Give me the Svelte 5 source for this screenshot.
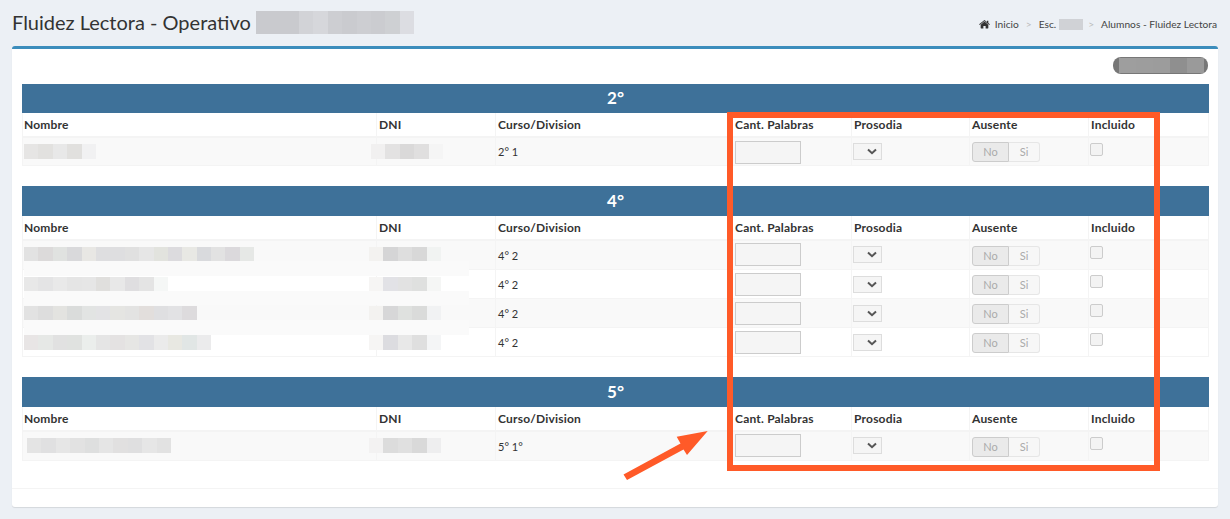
<script>
  const cols = ['Nombre', 'DNI', 'Curso/Division', 'Cant. Palabras', 'Prosodia', 'Ausente', 'Incluido'];
  const widths = [354, 119, 237, 119, 118, 119, 120];

  const groups = [
    {
      title: '2°',
      first: true,
      rows: [
        { curso: '2° 1', name: ['#e6e5e4', '#e2e1df', '#e8e8e8', '#e1e0de', '#f1f1f2'], dni: ['#f1f0f0', '#e3e2e2', '#dad9d9', '#e0dfdf', '#f5f5f5'], off: 0, dniOff: -8 }
      ]
    },
    {
      title: '4°',
      rows: [
        { curso: '4° 2', name: ['#e2e2e2', '#dcdada', '#e0e2e0', '#d9d9db', '#e8e7e4', '#dedee0', '#dedee0', '#e0e0e0', '#e6e6e6', '#e2e3de', '#dcdbde', '#e8e8e4', '#d9dadd', '#e2e2e2', '#dbd9dc', '#e6e8e6'], dni: ['#f3f2f0', '#d5d5d6', '#dedede', '#d8d8d8', '#f1f3f2'], off: 0, dniOff: -10 },
        { curso: '4° 2', name: ['#e8e8e8', '#e4e4e5', '#e9e9e9', '#e5e5e5', '#e6e6e6', '#e0dfdd', '#e8e8e8', '#dfdee0', '#e4e4e4', '#f5f7f6'], dni: ['#f6f5f4', '#e2e2e6', '#e2e2e2', '#dfe0df', '#f5f6f5'], off: 0, dniOff: -10 },
        { curso: '4° 2', name: ['#e2e2e2', '#dddddd', '#e3e3e0', '#dadcdb', '#e2e4e3', '#e3e3e5', '#e5e5e2', '#e3e3e2', '#e2dedc', '#dfdfe1', '#e2e2e4', '#dddbdd'], dni: ['#f3f2f0', '#d7d7d8', '#dfe1df', '#dadbda', '#f1f2f3'], off: 0, dniOff: -10 },
        { curso: '4° 2', name: ['#e8e5e5', '#e6e8e6', '#e1e1e1', '#e0e2e0', '#ebeeec', '#e5e5e5', '#e4e2e2', '#e6e6e4', '#e2e2e5', '#ebebeb', '#e8e8e2', '#e1e6e5', '#ebebec'], dni: ['#f6f5f4', '#dcdce0', '#e8e8e8', '#dfdfdf', '#f4f5f6'], off: 0, dniOff: -10 }
      ]
    },
    {
      title: '5°',
      rows: [
        { curso: '5° 1°', name: ['#e4e4e4', '#e0e0e1', '#e6e6e6', '#e2e2e2', '#dedfdf', '#e5e5e5', '#e1e0e0', '#dfdfe0', '#e6e6e6', '#e2e2e2'], dni: ['#f3f2f2', '#dcdcdc', '#e0e0e0', '#d9d9d9', '#eeeeef'], off: 3, dniOff: -10 }
      ]
    }
  ];

  const titleBlur = ['#c9cace', '#c9cace', '#c9cace', '#d2d3d7', '#d6d7db', '#cdced2', '#cacbcf', '#cdced2', '#cbccd0', '#ced0d3', '#dcdde2'];
  const pillBlur = ['#9e9e9e', '#9d9d9d', '#9c9c9c', '#8f8f8f', '#9a9a9a'];
</script>

<div class="page">
  <header class="top">
    <h1>Fluidez Lectora - Operativo
      <span class="mosaic title-blur">
        {#each titleBlur as c}<i style="background:{c}"></i>{/each}
      </span>
    </h1>
    <nav class="crumbs">
      <svg class="home" width="11" height="9" viewBox="0 0 24 20" aria-hidden="true">
        <path fill="#333" d="M12 3.2 3.5 10.300V18a1 1 0 0 0 1 1H9.500v-5.500h5V19h5a1 1 0 0 0 1-1v-7.700zM24 9.600 20.500 6.700V1.500H17.500v2.700L12 0 0 9.600l1.300 1.500L12 2.300l10.700 8.800z"/>
      </svg>
      <span>Inicio</span>
      <b>&gt;</b>
      <span>Esc.</span>
      <span class="crumb-blur"></span>
      <b>&gt;</b>
      <span>Alumnos - Fluidez Lectora</span>
    </nav>
  </header>

  <section class="box">
    <div class="toolbar">
      <div class="pill">
        {#each pillBlur as c}<i style="background:{c}"></i>{/each}
      </div>
    </div>

    {#each groups as g}
      <table class:first={g.first}>
        <colgroup>
          {#each widths as w}<col style="width:{w}px" />{/each}
        </colgroup>
        <thead>
          <tr class="band"><th colspan="7">{g.title}</th></tr>
          <tr class="heads">
            {#each cols as c}<th>{c}</th>{/each}
          </tr>
        </thead>
        <tbody>
          {#each g.rows as r}
            <tr>
              <td>
                <span class="mosaic" style="margin-left:{r.off}px">
                  {#each r.name as c}<i style="background:{c}"></i>{/each}
                </span>
              </td>
              <td>
                <span class="mosaic dni" style="margin-left:{r.dniOff}px">
                  {#each r.dni as c}<i style="background:{c}"></i>{/each}
                </span>
              </td>
              <td class="curso">{r.curso}</td>
              <td><input class="qty" type="text" disabled /></td>
              <td>
                <span class="sel">
                  <svg width="10" height="7" viewBox="0 0 10 7" aria-hidden="true">
                    <path d="M1 1.500 5 5.200 9 1.500" fill="none" stroke="#555" stroke-width="2"/>
                  </svg>
                </span>
              </td>
              <td>
                <span class="toggle"><span class="on">No</span><span class="off">Si</span></span>
              </td>
              <td class="inc"><span class="check"></span></td>
            </tr>
          {/each}
        </tbody>
      </table>
    {/each}

    <div class="foot"></div>

    <div class="strip s1"></div>
    <div class="strip s2"></div>
    <div class="strip s3"></div>
  </section>

  <div class="mark"></div>
  <svg class="arrow" width="92" height="56" viewBox="0 0 92 56" aria-hidden="true">
    <path d="M87.700 3 56.700 8.700 60.500 15.500 3.500 46.500 7 52 63.500 21.500 67 27z" fill="#ff5a28"/>
  </svg>
</div>

<style>
  :global(body) {
    margin: 0;
    background: #ecf0f5;
  }

  .page {
    position: relative;
    width: 1230px;
    height: 519px;
    overflow: hidden;
    background: #ecf0f5;
    font-family: Lato, "Open Sans", sans-serif;
    color: #333;
  }

  /* ── Header ── */
  .top {
    height: 46px;
    box-sizing: border-box;
    padding: 9px 13px 0 12px;
    display: flex;
    justify-content: space-between;
    align-items: flex-start;
  }

  h1 {
    margin: 0;
    font-size: 20px;
    font-weight: 400;
    line-height: 26px;
    color: #333;
    display: flex;
    align-items: center;
    gap: 5px;
  }

  .mosaic {
    display: inline-flex;
    vertical-align: top;
    height: 15px;
  }

  .mosaic i {
    display: block;
    width: 14.400px;
    height: 100%;
  }

  .title-blur {
    height: 23px;
  }

  .crumbs {
    display: flex;
    align-items: center;
    gap: 5px;
    margin-top: 8px;
    font-size: 10.200px;
    line-height: 14px;
    color: #444;
  }

  .crumbs b {
    font-weight: 400;
    color: #bbb;
    margin: 0 2px;
  }

  .home {
    margin-right: 0;
  }

  .crumb-blur {
    width: 24px;
    height: 11px;
    margin-left: -2px;
    margin-right: -2px;
    background: #d0d2d6;
  }

  /* ── Box ── */
  .box {
    position: relative;
    margin: 0 12px;
    height: 461px;
    box-sizing: border-box;
    padding: 8px 10px 0;
    background: #fff;
    border-top: 3px solid #3c8dbc;
    border-radius: 3px;
    box-shadow: 0 1px 1px rgba(0, 0, 0, 0.1);
  }

  .toolbar {
    display: flex;
    justify-content: flex-end;
    height: 27px;
  }

  .pill {
    display: flex;
    width: 95px;
    height: 17px;
    box-sizing: border-box;
    padding: 1px 4px 1px 6px;
    background: #777;
    border-radius: 8px;
  }

  .pill i {
    flex: 1;
  }

  /* ── Tables ── */
  table {
    width: 1186px;
    border-collapse: collapse;
    table-layout: fixed;
    margin-bottom: 20px;
  }

  th, td {
    box-sizing: border-box;
    padding: 0 2px;
    text-align: left;
    border: 1px solid #f4f4f4;
  }

  th:first-child, td:first-child {
    padding-left: 1px;
  }

  .band th {
    height: 29px;
    padding: 0 0 2px;
    background: #3e7199;
    border-color: #3e7199;
    color: #fff;
    text-align: center;
    font-size: 17px;
    font-weight: 700;
  }

  .first .band th {
    height: 28px;
  }

  .heads th {
    height: 24px;
    font-size: 12px;
    letter-spacing: 0.2px;
    font-weight: 700;
    color: #333;
    border-bottom-width: 2px;
  }

  tbody tr {
    height: 29px;
  }

  tbody tr:first-child {
    height: 30px;
  }

  .first tbody tr:first-child {
    height: 29px;
  }

  tbody tr:nth-child(odd) {
    background: #f9f9f9;
  }

  tbody td {
    vertical-align: middle;
    font-size: 11px;
    line-height: 14px;
  }

  td.curso {
    padding-top: 2px;
  }

  .qty {
    display: block;
    width: 66px;
    height: 23px;
    box-sizing: border-box;
    margin: 0;
    padding: 0;
    background: #f5f5f5;
    border: 1px solid #ccc;
  }

  .first .qty {
    margin-top: 2px;
  }

  .sel {
    display: flex;
    align-items: center;
    justify-content: flex-end;
    width: 29px;
    height: 17px;
    box-sizing: border-box;
    margin-left: -1px;
    padding-right: 4px;
    border: 1px solid #ddd;
    background: #f5f5f5;
  }

  .toggle {
    display: inline-flex;
    height: 20px;
    margin-top: 2px;
    font-size: 11px;
    line-height: 18px;
    color: #aaa;
  }

  .toggle span {
    box-sizing: border-box;
    text-align: center;
  }

  .on {
    width: 37px;
    background: #eaeaea;
    border: 1px solid #ccc;
    border-radius: 3px 0 0 3px;
  }

  .off {
    width: 31px;
    background: #f7f7f7;
    border: 1px solid #e6e6e6;
    border-left: 0;
    border-radius: 0 3px 3px 0;
  }

  td.inc {
    vertical-align: top;
    padding-top: 5px;
  }

  .check {
    display: block;
    width: 11px;
    height: 11px;
    margin-left: -1px;
    background: #f3f3f3;
    border: 1px solid #ccc;
    border-radius: 2px;
  }

  .foot {
    position: absolute;
    left: 0;
    right: 0;
    top: 439px;
    border-top: 1px solid #f4f4f4;
  }

  /* pale bands left over the blurred names */
  .strip {
    position: absolute;
    left: 12px;
    width: 445px;
    height: 15px;
    background: #fafafa;
  }

  .s1 { top: 212px; }
  .s2 { top: 242px; height: 14px; }
  .s3 { top: 271px; }

  /* ── Annotation ── */
  .mark {
    position: absolute;
    left: 727px;
    top: 112px;
    width: 433px;
    height: 359px;
    box-sizing: border-box;
    border: 6px solid #ff5a28;
  }

  .arrow {
    position: absolute;
    left: 620px;
    top: 428px;
  }
</style>
